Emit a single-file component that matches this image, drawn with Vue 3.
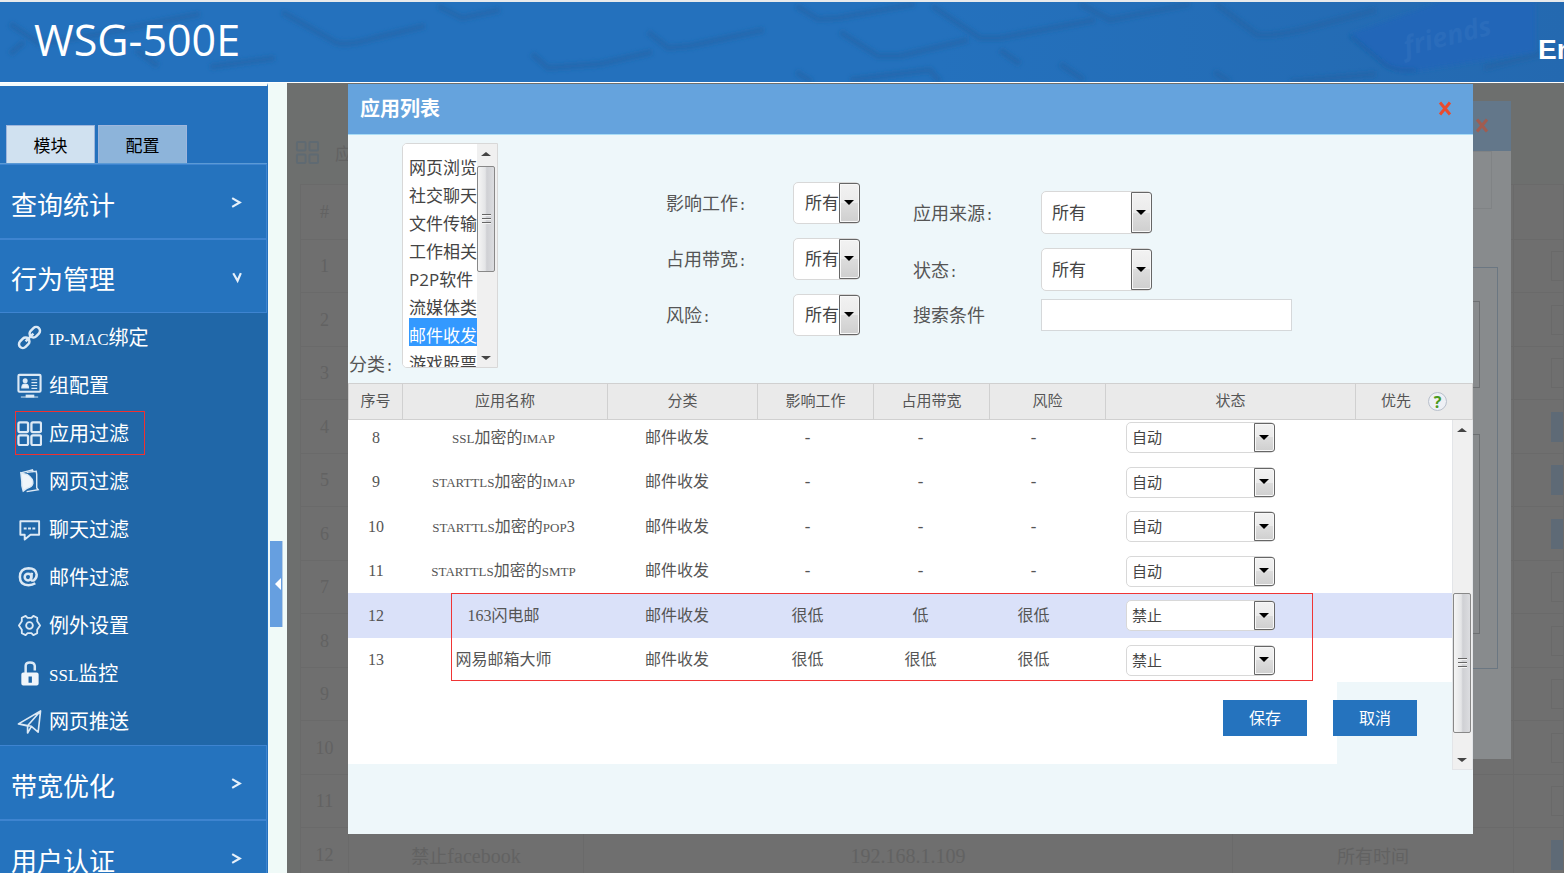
<script setup>
import { ref } from 'vue'

// Splits mixed text so digits and Latin letters can use their own face and size.
const runs = (text) =>
  (text.match(/[0-9]+|[\x20-\x2f\x3a-\x7e]+|[^\x20-\x7e]+/g) || []).map((t) => ({
    t,
    cls: /^[0-9]/.test(t) ? 'num' : /^[\x20-\x7e]/.test(t) ? 'latin' : '',
  }))

const subItems = [
  { icon: 'link', text: 'IP-MAC绑定' },
  { icon: 'group', text: '组配置' },
  { icon: 'apps', text: '应用过滤', marked: true },
  { icon: 'page', text: '网页过滤' },
  { icon: 'chat', text: '聊天过滤' },
  { icon: 'mail', text: '邮件过滤' },
  { icon: 'gear', text: '例外设置' },
  { icon: 'lock', text: 'SSL监控' },
  { icon: 'send', text: '网页推送' },
]

const categories = ['网页浏览', '社交聊天', '文件传输', '工作相关', 'P2P软件', '流媒体类', '邮件收发', '游戏股票']
const category = ref(['邮件收发'])

const leftFilters = [
  { id: 'f-work', label: '影响工作:' },
  { id: 'f-band', label: '占用带宽:' },
  { id: 'f-risk', label: '风险:' },
]
const rightFilters = [
  { id: 'f-source', label: '应用来源:' },
  { id: 'f-state', label: '状态:' },
]

const rows = ref([
  { no: '8', name: 'SSL加密的IMAP', kind: '邮件收发', work: '-', band: '-', risk: '-', state: '自动' },
  { no: '9', name: 'STARTTLS加密的IMAP', kind: '邮件收发', work: '-', band: '-', risk: '-', state: '自动' },
  { no: '10', name: 'STARTTLS加密的POP3', kind: '邮件收发', work: '-', band: '-', risk: '-', state: '自动' },
  { no: '11', name: 'STARTTLS加密的SMTP', kind: '邮件收发', work: '-', band: '-', risk: '-', state: '自动' },
  { no: '12', name: '163闪电邮', kind: '邮件收发', work: '很低', band: '低', risk: '很低', state: '禁止', active: true },
  { no: '13', name: '网易邮箱大师', kind: '邮件收发', work: '很低', band: '很低', risk: '很低', state: '禁止' },
])

const pageRows = Array.from({ length: 12 }, (_, i) => ({
  no: String(i + 1),
  button: [4, 5, 6, 12].includes(i + 1),
  last: i === 11,
}))
</script>

<template>
  <div class="page">
    <header class="top">
      <svg class="keys" viewBox="0 0 1564 80" preserveAspectRatio="none" aria-hidden="true">
        <defs>
          <filter id="soft" x="-5%" y="-20%" width="110%" height="140%"><feGaussianBlur stdDeviation="2" /></filter>
          <linearGradient id="tint" x1="0" x2="1"><stop offset="0.6" stop-color="#2471bd" /><stop offset="1" stop-color="#2469b0" /></linearGradient>
        </defs>
        <rect width="1564" height="80" fill="url(#tint)" />
        <g filter="url(#soft)" fill="none" stroke="#235f9f" stroke-width="6" stroke-opacity=".5" stroke-linejoin="round">
          <path d="M10 22 L40 42 L100 32 L200 12" />
          <path d="M10 52 L24 40" />
          <path d="M136 48 L158 64 M210 65 L275 56" />
          <path d="M282 10 L335 40 Q345 45 375 36 L425 24" />
          <path d="M438 4 L462 16 L500 8" />
          <path d="M532 52 L548 66 L600 62 L652 50" />
          <path d="M648 30 L668 46 L690 44 L764 28" />
          <path d="M796 4 L818 17 L838 16 L915 2" />
          <path d="M840 30 L878 54 L900 54 L968 38" />
          <path d="M932 4 L980 36 L1000 36 L1095 18" />
          <path d="M1000 48 L1020 62 M1080 2 L1110 18 L1190 2" />
          <path d="M1216 2 L1256 32 Q1264 36 1300 28 L1376 8" />
          <path d="M1060 62 L1084 78 M1214 70 L1230 80 M1290 80 L1376 72" />
          <path d="M796 70 L812 80 M850 78 L930 68 L940 80" />
          <path d="M1484 66 L1564 46" />
        </g>
        <path d="M1350 32 L1440 0 L1535 0 L1535 50 L1410 70 Q1390 70 1380 58 Z" fill="#2066b8" filter="url(#soft)" />
        <path d="M1350 34 L1382 60 Q1392 70 1416 68" fill="none" stroke="#1e5ca0" stroke-width="2" filter="url(#soft)" />
        <text x="1406" y="54" class="keyword" transform="rotate(-14 1406 54)">friends</text>
      </svg>
      <h1>WSG-500E</h1>
      <a class="lang" href="#">English</a>
    </header>

    <div class="main">
      <nav class="side">
        <div class="tabs">
          <button type="button" class="on">模块</button>
          <button type="button">配置</button>
        </div>
        <a class="menu" href="#">查询统计<svg viewBox="0 0 12 12"><path d="M2 2l7 4-7 4" /></svg></a>
        <a class="menu open" href="#">行为管理<svg viewBox="0 0 12 12"><path d="M3 2l4 7 3-7" /></svg></a>
        <ul>
          <li v-for="s in subItems" :key="s.text">
            <a href="#" :class="{ marked: s.marked }">
              <svg class="ico" viewBox="0 0 26 26" aria-hidden="true">
                <g v-if="s.icon === 'link'" stroke-width="2.6">
                  <rect x="-6" y="-4" width="12" height="8" rx="4" transform="translate(18.500 7.500) rotate(-45)" />
                  <rect x="-6" y="-4" width="12" height="8" rx="4" transform="translate(7.500 18.500) rotate(-45)" />
                  <path d="M9 17l8-8" />
                </g>
                <g v-else-if="s.icon === 'group'" stroke-width="2.200">
                  <rect x="1.500" y="2" width="23" height="17.500" rx="1" />
                  <circle class="solid" cx="8.500" cy="8" r="1.500" />
                  <path class="solid" d="M5 15.500q0-4 3.500-4t3.500 4z" stroke-width="1.200" />
                  <path d="M15 7h6M15 10h6M15 13h6M15 16h6" stroke-width="1.200" />
                  <path d="M9 24h9" stroke-width="3" />
                  <path d="M4 25h18" stroke-width="1" />
                </g>
                <g v-else-if="s.icon === 'apps'" stroke-width="2.400">
                  <rect x="1.500" y="1.500" width="10" height="10" rx="1.500" />
                  <rect x="15" y="1.500" width="10" height="10" rx="1.500" />
                  <rect x="1.500" y="15" width="10" height="10" rx="1.500" />
                  <rect x="15" y="15" width="10" height="10" rx="1.500" />
                </g>
                <g v-else-if="s.icon === 'page'" stroke-width="1.500">
                  <path d="M10 3.500l10-1 .5 3v14l1.500 2-12 2" />
                  <path class="solid" d="M4 4l7 2q6 4 5.500 9-1 4-6 5l-4 3q-2-5-1.500-10z" />
                  <path d="M4 4l8-2 4-1 1 2" />
                </g>
                <g v-else-if="s.icon === 'chat'" stroke-width="2">
                  <path d="M3.500 4.500h19.500v14h-9L8 23.500V18.500H3.500z" stroke-linejoin="round" />
                  <path d="M7 12h12" stroke-dasharray="3 1.500" />
                </g>
                <g v-else-if="s.icon === 'mail'" stroke-width="2.600">
                  <circle cx="11.500" cy="12.500" r="3.500" />
                  <path d="M15.500 8l-1 6q0 3 3 2 3-2 3-6-1-6.500-8.500-6.500Q3 4 3 12.500 3 21 12 21q4 0 7-2" />
                </g>
                <g v-else-if="s.icon === 'gear'" stroke-width="1.900">
                  <path d="M9 3l2 2h4l2-2 4 2v3.500l3 4.500-3 4.500V21l-4 2-2-2h-4l-2 2-4-2v-3.500L2 13l3-4.500V5z" stroke-linejoin="round" />
                  <circle cx="13" cy="13" r="3.500" />
                </g>
                <g v-else-if="s.icon === 'lock'" stroke-width="2.600">
                  <path d="M9 13V5q0-3.500 4.500-3.500T18.500 5v5" />
                  <path class="solid" fill-rule="evenodd" d="M4.500 14q0-2 2-2h14q2 0 2 2v9.500q0 2-2 2h-14q-2 0-2-2zm7.500 2v6.500h3.500V16z" stroke-width="0" />
                </g>
                <g v-else stroke-width="1.700" stroke-linejoin="round">
                  <path d="M1.500 15.500L24.500 2l-2.500 22-7-6zM24.500 2L11 17.500V25l4-7M11 17.500l-9.500-2" />
                </g>
              </svg>
              <span><span v-for="r in runs(s.text)" :key="r.t" :class="r.cls">{{ r.t }}</span></span>
            </a>
          </li>
        </ul>
        <a class="menu" href="#">带宽优化<svg viewBox="0 0 12 12"><path d="M2 2l7 4-7 4" /></svg></a>
        <a class="menu" href="#">用户认证<svg viewBox="0 0 12 12"><path d="M2 2l7 4-7 4" /></svg></a>
      </nav>

      <div class="gutter"><button type="button" aria-label="收起"></button></div>

      <section class="content">
        <div class="crumb">
          <svg viewBox="0 0 26 26" aria-hidden="true">
            <rect x="2" y="2" width="9" height="9" rx="1" /><rect x="15" y="2" width="9" height="9" rx="1" />
            <rect x="2" y="15" width="9" height="9" rx="1" /><rect x="15" y="15" width="9" height="9" rx="1" />
          </svg>
          <span>应</span>
        </div>
        <table class="under">
          <colgroup><col class="u1" /><col class="u2" /><col /><col class="u4" /><col class="u5" /></colgroup>
          <thead><tr><th>#</th><th></th><th></th><th></th><th></th></tr></thead>
          <tbody>
            <tr v-for="r in pageRows" :key="r.no">
              <td>{{ r.no }}</td>
              <td><template v-if="r.last">禁止<span class="latin">facebook</span></template></td>
              <td><span v-if="r.last" class="latin">192.168.1.109</span></td>
              <td><template v-if="r.last">所有时间</template></td>
              <td><i class="chip" :class="{ fill: r.button }"></i></td>
            </tr>
          </tbody>
        </table>

        <div class="back" aria-hidden="true">
          <div class="back-head">
            <svg class="cross" viewBox="0 0 14 14"><path d="M2 1l10 12M12 1L2 13" /></svg>
          </div>
          <div class="back-tab"></div>
          <div class="back-set"><div class="b1"></div><div class="b2"></div></div>
        </div>

        <div class="dialog" role="dialog" aria-labelledby="dlg-title">
          <div class="dlg-head">
            <h2 id="dlg-title">应用列表</h2>
            <button type="button" aria-label="关闭"><svg class="cross" viewBox="0 0 14 14"><path d="M2 1l10 12M12 1L2 13" /></svg></button>
          </div>

          <form class="filters" @submit.prevent>
            <label class="cat-label" for="f-cat">分类<span class="colon">:</span></label>
            <div class="listbox">
              <select id="f-cat" v-model="category" multiple size="8">
                <option v-for="c in categories" :key="c">{{ c }}</option>
              </select>
              <div class="bar small" aria-hidden="true"><i class="up"></i><i class="thumb"></i><i class="down"></i></div>
            </div>
            <div class="stack left">
              <div v-for="f in leftFilters" :key="f.id" class="field">
                <label :for="f.id"><span v-for="r in runs(f.label)" :key="r.t" :class="{ colon: r.cls }">{{ r.t }}</span></label>
                <span class="drop"><select :id="f.id"><option>所有</option></select></span>
              </div>
            </div>
            <div class="stack right">
              <div v-for="f in rightFilters" :key="f.id" class="field">
                <label :for="f.id"><span v-for="r in runs(f.label)" :key="r.t" :class="{ colon: r.cls }">{{ r.t }}</span></label>
                <span class="drop wide"><select :id="f.id"><option>所有</option></select></span>
              </div>
              <div class="field search">
                <label for="f-q">搜索条件</label>
                <input id="f-q" type="text" />
              </div>
            </div>
          </form>

          <table class="heads">
            <colgroup><col class="h1" /><col class="h2" /><col class="h3" /><col class="h4" /><col class="h4" /><col class="h4" /><col /><col class="h8" /></colgroup>
            <thead>
              <tr>
                <th>序号</th><th>应用名称</th><th>分类</th><th>影响工作</th><th>占用带宽</th><th>风险</th><th>状态</th>
                <th><span class="prio">优先<i class="help">?</i></span></th>
              </tr>
            </thead>
          </table>

          <div class="scroller">
            <div class="view">
              <table class="list">
                <colgroup><col class="c1" /><col class="c2" /><col class="c3" /><col class="c4" /><col class="c4" /><col class="c4" /><col /></colgroup>
                <tbody>
                  <tr v-for="row in rows" :key="row.no" :class="{ active: row.active }">
                    <td><span class="num">{{ row.no }}</span></td>
                    <td><span v-for="r in runs(row.name)" :key="r.t" :class="r.cls">{{ r.t }}</span></td>
                    <td>{{ row.kind }}</td>
                    <td><span :class="{ dash: row.work === '-' }">{{ row.work }}</span></td>
                    <td><span :class="{ dash: row.band === '-' }">{{ row.band }}</span></td>
                    <td><span :class="{ dash: row.risk === '-' }">{{ row.risk }}</span></td>
                    <td class="state">
                      <span class="drop mini">
                        <select v-model="row.state" :aria-label="row.name"><option>自动</option><option>禁止</option></select>
                      </span>
                    </td>
                  </tr>
                </tbody>
              </table>
              <div class="actions">
                <button type="button">保存</button>
                <button type="button">取消</button>
              </div>
              <div class="frame"></div>
            </div>
            <div class="bar" aria-hidden="true"><i class="up"></i><i class="thumb"></i><i class="down"></i></div>
          </div>
        </div>
      </section>
    </div>
  </div>
</template>

<style>
body { background: #f0faf8; overflow: hidden; }
</style>

<style scoped>
*, *::before, *::after { box-sizing: border-box; }
.page {
  --song: "Noto Sans CJK SC", sans-serif;
  --hei: "Open Sans", "Noto Sans CJK SC", sans-serif;
  --roman: "Liberation Serif", serif;
  height: 100vh;
  display: flex;
  flex-direction: column;
  overflow: hidden;
  font-family: var(--song);
  color: #555;
}
a { color: inherit; text-decoration: none; }
button { font-family: inherit; cursor: pointer; }
.latin, .num { font-family: var(--roman); line-height: 1; }
.colon, .dash { font-family: "Liberation Mono", monospace; line-height: 1; }

.top {
  position: relative;
  flex: none;
  display: flex;
  align-items: flex-start;
  height: 83px;
  border-top: 2px solid #e8eaec;
  border-bottom: 1px solid #fff;
  background: #2471bd;
  color: #fff;
  overflow: hidden;
}
.keys { position: absolute; inset: 0; width: 100%; height: 100%; }
.keyword { font: italic 700 27px "Open Sans", sans-serif; fill: #3a78c2; fill-opacity: .35; }
h1 { position: relative; margin: 9px 0 0 34px; font: 400 43px/58px "Open Sans", sans-serif; }
.lang {
  position: relative;
  width: 26px;
  margin: 32px 0 0 auto;
  font: 700 28px/32px "Liberation Sans", sans-serif;
  white-space: nowrap;
  overflow: hidden;
}

.main { flex: 1; display: flex; min-height: 0; }
.side {
  flex: none;
  width: 268px;
  border-top: 3px solid #f4fbfb;
  border-right: 1px solid #2471bd;
  background: #2471bd;
  color: #fff;
  overflow: hidden;
}
.tabs { display: flex; gap: 3px; padding: 39px 6px 0; border-bottom: 1px solid #5b9ad5; }
.tabs button {
  width: 89px;
  height: 38px;
  padding: 0;
  border: 1px solid #9fb6dc;
  border-bottom: 0;
  background: #8db4da;
  color: #000;
  font-size: 17px;
}
.tabs .on { background: #d0e1f0; }
.menu {
  display: flex;
  align-items: center;
  justify-content: space-between;
  height: 75px;
  padding: 6px 23px 0 11px;
  border: 1px solid #3e84d0;
  border-left: 0;
  background: #2573be;
  font: 26px/26px var(--hei);
}
.open { height: 74px; }
.menu svg { width: 13px; height: 13px; margin-bottom: 4px; fill: none; stroke: #e6f0fa; stroke-width: 2; }
ul { margin: 0; padding: 0; list-style: none; background: #2067a8; }
li { display: flex; align-items: center; height: 48px; padding-left: 15px; }
li a { display: flex; align-items: center; gap: 7px; height: 44px; padding: 0 15px 0 1px; border: 1px solid transparent; font-size: 20px; line-height: 30px; }
li a > span { white-space: nowrap; }
li .latin { font-size: 17px; }
li a.marked { border-color: #f03030; }
.ico { width: 25px; height: 25px; fill: none; stroke: #dce9f5; }
.ico .solid { fill: #f0f5fa; }

.gutter { flex: none; display: flex; width: 19px; padding: 458px 2px 0; background: #f0faf8; }
.gutter button { position: relative; width: 13px; height: 86px; padding: 0; border: 0; border-right: 1px solid #b8cfe6; background: #669fe0; }
.gutter button::after {
  content: "";
  position: absolute;
  top: 37px;
  right: 1px;
  border: 6px solid transparent;
  border-left-width: 0;
  border-right-color: #fff;
}

.content { position: relative; flex: 1; min-width: 0; overflow: hidden; background: #6d6f6e; color: #626262; }
.crumb { display: flex; align-items: center; gap: 15px; height: 101px; padding: 37px 8px 0; font-size: 17px; }
.crumb svg { width: 25px; height: 25px; fill: none; stroke: #5f6a72; stroke-width: 2; }
.under { width: calc(100% - 13px); margin-left: 13px; border-collapse: collapse; table-layout: fixed; background: #6f6f6f; font-size: 18px; }
.under th, .under td { height: 53px; padding: 0; border: 1px solid #6a6a6a; font-weight: 400; text-align: center; line-height: 24px; }
.under tr:nth-child(even) td { height: 54px; }
.under th, .under td:first-child { font-family: var(--roman); }
.under .latin { font-size: 20px; }
.under th { height: 55px; }
.u1 { width: 48px; }
.u2 { width: 235px; }
.u4 { width: 281px; }
.u5 { width: 50px; }
.chip { display: block; width: 12px; height: 30px; margin-left: auto; border: 1px solid #696969; border-right: 0; }
.chip.fill { background: #5e6a76; border-color: #5e6a76; }

.cross { display: block; width: 14px; height: 15px; fill: none; stroke: #ea4b2f; stroke-width: 3; }
.back { position: absolute; top: 18px; right: 53px; width: 600px; height: 658px; background: #888b8d; }
.back-head { display: flex; justify-content: flex-end; align-items: center; height: 50px; padding: 0 22px 2px 0; background: #63778a; }
.back-head .cross { stroke: #a15c50; }
.back-tab { height: 58px; margin-right: 19px; border: 1px solid #808385; }
.back-set { height: 402px; margin: 58px 13px 0 0; padding: 33px 17px; border: 1px solid #6b7782; }
.b1 { height: 87px; border: 1px solid #6d7072; }
.b2 { height: 200px; margin-top: 46px; border: 1px solid #6d7072; }

.dialog { position: absolute; top: 1px; left: 61px; right: 91px; height: 750px; background: #eef7fa; color: #555; }
.dlg-head { display: flex; align-items: center; justify-content: space-between; height: 51px; padding: 0 21px 2px 12px; border-bottom: 1px solid #a9dcf5; background: #65a3dd; }
.dlg-head h2 { margin: 0; color: #fff; font-size: 20px; line-height: 30px; font-weight: 700; }
.dlg-head button { padding: 0; border: 0; background: none; }

.filters { display: flex; align-items: flex-start; height: 248px; padding-top: 8px; font-size: 18px; line-height: 26px; }
.filters .colon { font-size: 15px; }
.cat-label { width: 54px; padding: 207px 0 0 1px; white-space: nowrap; }
.listbox { display: flex; width: 96px; height: 225px; border: 1px solid #d8d8d8; border-radius: 5px 0 0 5px; background: #fff; overflow: hidden; }
.listbox select { flex: 1; min-width: 0; height: 223px; padding: 6px 0 0 6px; border: 0; background: #fff; color: #444; font: 17px/28px var(--hei); overflow: hidden; scrollbar-width: none; outline: 0; }
.listbox option { height: 28px; min-height: 28px; padding: 4px 0 0; font: 17px/24px var(--hei); white-space: nowrap; }
.listbox option:checked { background: #39f linear-gradient(#39f, #39f); color: #fff; -webkit-text-fill-color: #fff; }
.stack { display: flex; flex-direction: column; gap: 14px; }
.left { margin: 39px 0 0 168px; }
.right { margin: 48px 0 0 53px; }
.field { display: flex; align-items: center; }
.field label { width: 127px; padding-bottom: 2px; }
.right label { width: 128px; }
.search { margin-top: -6px; }
.search input { width: 251px; height: 32px; padding: 0 8px; border: 1px solid #d5d8da; background: #fff; font: 17px/24px var(--hei); }

.drop { position: relative; display: block; width: 67px; height: 42px; }
.drop select { display: block; width: 100%; height: 100%; padding: 2px 0 2px 11px; border: 1px solid #d8d8d8; border-radius: 5px; appearance: none; background: #fff; color: #444; font: 17px/24px var(--hei); text-overflow: clip; }
.drop::before {
  content: "";
  position: absolute;
  z-index: 1;
  top: 1px;
  right: 0;
  bottom: 1px;
  width: 21px;
  border: 1px solid #666;
  border-radius: 0 3px 3px 0;
  background: linear-gradient(#f2f2f2, #ebebeb 50%, #dddddd 50%, #cfcfcf);
  box-shadow: inset 0 0 0 1px #f8f8f8;
  pointer-events: none;
}
.drop::after {
  content: "";
  position: absolute;
  z-index: 1;
  top: calc(50% - 3px);
  right: 6px;
  border: 5px solid transparent;
  border-bottom-width: 0;
  border-top-color: #000;
  pointer-events: none;
}
.wide { width: 111px; height: 43px; }
.wide select { padding-left: 10px; }
.mini { width: 149px; height: 31px; }
.mini select { padding: 0 0 1px 5px; font-size: 15px; line-height: 22px; }

table { border-spacing: 0; }
.heads { width: 100%; border-collapse: collapse; table-layout: fixed; background: #eaeaea; font-size: 15px; line-height: 22px; }
.heads th { height: 36px; padding: 0 0 4px; border: 1px solid #d0d0d0; font-weight: 400; }
.h1 { width: 54px; }
.h2 { width: 205px; }
.h3 { width: 150px; }
.h4 { width: 116px; }
.h8 { width: 117px; }
.prio { display: flex; align-items: center; justify-content: center; gap: 17px; }
.help { width: 19px; height: 19px; margin: 3px 0 0; border: 1px solid #b9c0cc; border-radius: 50%; background: #eef0f5; color: #4a9a1c; font: 700 16px/18px "Open Sans", sans-serif; text-align: center; }

.scroller { display: flex; height: 350px; }
.view { position: relative; flex: 1; min-width: 0; overflow: hidden; }
.list { width: 100%; margin-top: -5px; table-layout: fixed; background: #fff; font-size: 16px; line-height: 24px; }
.list td { height: 44px; padding: 0 0 4px; text-align: center; white-space: nowrap; }
.list tr:nth-child(odd) td { height: 45px; }
.list .latin { font-size: 13px; }
.list td.state { padding: 0 0 0 36px; text-align: left; }
.active { background: #dae1f9; }
.c1 { width: 56px; }
.c2 { width: 199px; }
.c3 { width: 148px; }
.c4 { width: 113px; }
.actions { display: flex; justify-content: flex-end; gap: 26px; height: 82px; padding: 18px 35px 0 0; background: linear-gradient(#fff, #fff) no-repeat 0 0 / calc(100% - 115px) 100%; }
.actions button { width: 84px; height: 36px; padding: 0 0 2px; border: 0; background: #2573be; color: #fff; font-size: 16px; }
.frame { position: absolute; top: 173px; left: 103px; right: 139px; height: 88px; border: 1px solid #f03535; pointer-events: none; }

.bar { position: relative; flex: none; width: 21px; border: 1px solid #e3e5e8; border-width: 0 1px 1px; background: #f0f0f0; }
.bar i { position: absolute; left: 0; }
.bar .up, .bar .down { left: 4px; border: 5px solid transparent; }
.bar .up { top: 8px; border-top-width: 0; border-bottom: 4px solid #444; }
.bar .down { bottom: 7px; border-bottom-width: 0; border-top: 4px solid #444; }
.bar .thumb { top: 173px; width: 18px; height: 140px; border: 1px solid #888; border-radius: 2px; background: linear-gradient(90deg, #f5f5f5, #e4e5e7 45%, #cfd0d4 55%, #dcdde0); }
.bar .thumb::after {
  content: "";
  position: absolute;
  top: calc(50% - 5px);
  left: 4px;
  width: 9px;
  height: 10px;
  background: repeating-linear-gradient(#666 0 1px, #f5f5f5 1px 2px, transparent 2px 4px);
}
.bar.small { width: 20px; border-width: 0; }
.bar.small .thumb { top: 22px; height: 106px; }
</style>
